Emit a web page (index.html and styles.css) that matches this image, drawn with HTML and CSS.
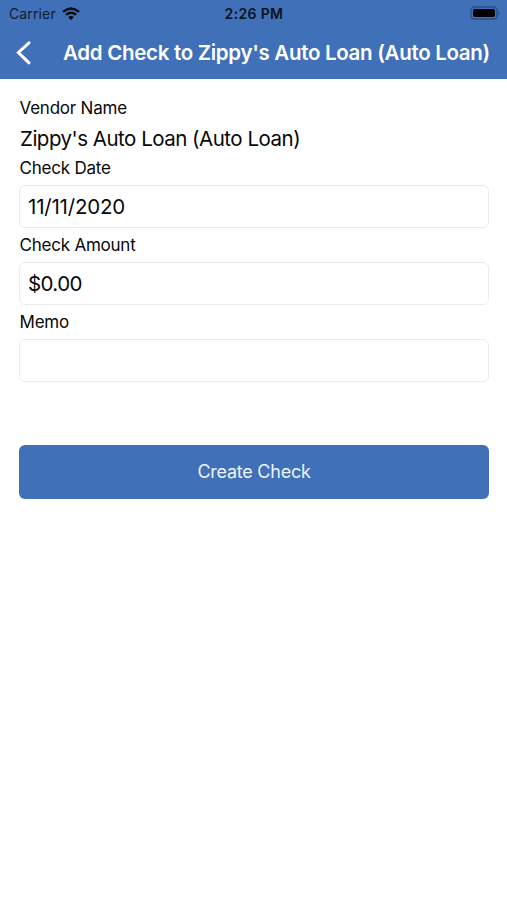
FILE: index.html
```html
<!DOCTYPE html>
<html lang="en">
<head>
<meta charset="utf-8">
<title>Add Check</title>
<link rel="stylesheet" href="styles.css">
</head>
<body>
<header class="top">
  <div class="status">
    <div class="carrier"><span class="carrier-name">Carrier</span>
      <svg class="wifi" viewBox="0 0 18 13" width="18" height="13"><path d="M9 12.9 6.3 10.2Q9 8 11.7 10.2Z"/><path class="arc" d="M4 7.9Q9 3.7 14 7.9M1 4.8Q9-2 17 4.8"/></svg>
    </div>
    <div class="time">2:26 PM</div>
    <svg class="battery" viewBox="0 0 31 14" width="31" height="14"><rect class="shell" x="1" y="1" width="26" height="12" rx="3.5"/><rect x="3" y="3" width="22" height="8" rx="1.8"/><path class="cap" d="M28.5 5c2 .6 2 3.4 0 4z"/></svg>
  </div>
  <div class="nav">
    <svg class="back" viewBox="0 0 16 26" width="16" height="26"><path d="M13 2.8 2.4 12.5 13 22.8"/></svg>
    <h1 class="title">Add Check to Zippy's Auto Loan (Auto Loan)</h1>
  </div>
</header>
<main class="form">
  <div class="label">Vendor Name</div>
  <div class="vendor">Zippy's Auto Loan (Auto Loan)</div>
  <label class="label" for="date">Check Date</label>
  <input class="field" id="date" value="11/11/2020">
  <label class="label" for="amount">Check Amount</label>
  <input class="field amount" id="amount" value="$0.00">
  <label class="label" for="memo">Memo</label>
  <input class="field" id="memo">
  <button class="create">Create Check</button>
</main>
</body>
</html>
```
FILE: styles.css
```css
* { box-sizing: border-box; }
body { margin: 0; background: #fff; color: #080808; font-family: Inter, "Liberation Sans", sans-serif; }
.top { height: 79px; background: #4070b8; }
.status { height: 27px; display: grid; grid-template-columns: 1fr auto 1fr; align-items: center; padding: 0 6px 0 9px; font-size: 14px; color: #101c30; }
.carrier { display: flex; align-items: center; gap: 6px; }
.carrier-name { letter-spacing: 0.13px; }
.wifi { margin-top: -1px; }
.arc { fill: none; stroke: #080c14; stroke-width: 2.4; }
.time { margin-left: -2px; font-weight: 600; letter-spacing: 0.35px; color: #0b1220; }
.battery { justify-self: end; margin-top: -1px; }
.shell { fill: none; stroke: #2c4f85; stroke-width: 1.4; }
.cap { fill: #2c4f85; }
.nav { height: 52px; display: flex; align-items: center; padding-left: 16px; }
.back { fill: none; stroke: #fff; stroke-width: 3; stroke-linecap: round; }
.title { margin: -1px 0 0 31px; font-size: 20.5px; font-weight: 600; letter-spacing: -0.3px; color: #fff; white-space: nowrap; }
.form { display: flex; flex-direction: column; padding: 17px 18px 0 19px; }
.label { height: 24px; padding-left: 0.5px; line-height: 24px; font-size: 17px; letter-spacing: -0.22px; white-space: nowrap; }
.vendor { height: 36px; padding: 1px 0 0 1px; line-height: 36px; font-size: 20.5px; letter-spacing: -0.5px; white-space: nowrap; }
.field { height: 43px; margin: 5px 0; padding: 0 8px 1px; border: 1px solid #ebebeb; border-radius: 6px; font: 20.5px Inter, sans-serif; letter-spacing: -0.2px; color: #080808; outline: 0; background: #fff; }
.amount { letter-spacing: -0.6px; }
.create { height: 53.5px; margin-top: 58px; padding: 0; border: 0; border-radius: 6px; background: #4070b8; color: #eef4fc; font: 18px Inter, sans-serif; letter-spacing: -0.25px; }
```
